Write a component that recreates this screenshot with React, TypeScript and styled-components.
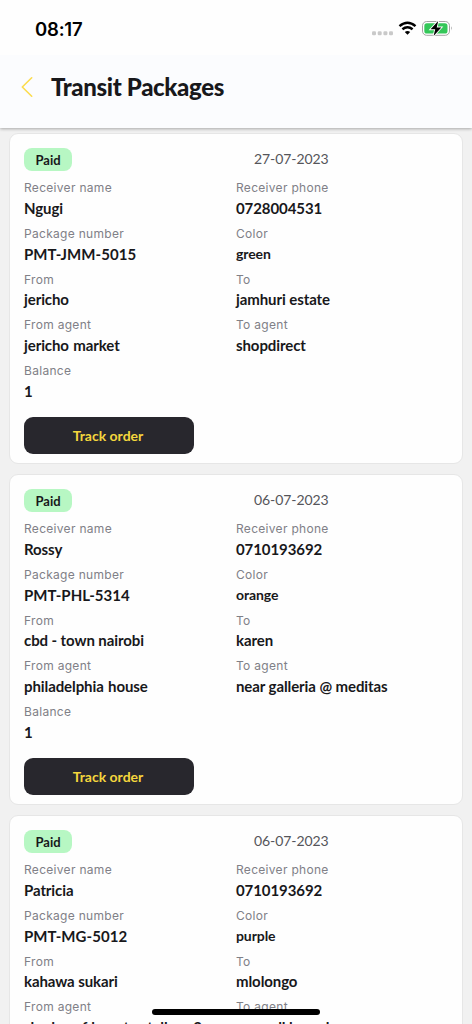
import React, { FC } from 'react';
import styled, { createGlobalStyle } from 'styled-components';

type TransitPackage = {
	date: string;
	fields: [string, string][];
};

const PACKAGES: TransitPackage[] = [
	{
		date: '27-07-2023',
		fields: [
			['Receiver name', 'Ngugi'],
			['Receiver phone', '0728004531'],
			['Package number', 'PMT-JMM-5015'],
			['Color', 'green'],
			['From', 'jericho'],
			['To', 'jamhuri estate'],
			['From agent', 'jericho market'],
			['To agent', 'shopdirect'],
			['Balance', '1'],
		],
	},
	{
		date: '06-07-2023',
		fields: [
			['Receiver name', 'Rossy'],
			['Receiver phone', '0710193692'],
			['Package number', 'PMT-PHL-5314'],
			['Color', 'orange'],
			['From', 'cbd - town nairobi'],
			['To', 'karen'],
			['From agent', 'philadelphia house'],
			['To agent', 'near galleria @ meditas'],
			['Balance', '1'],
		],
	},
	{
		date: '06-07-2023',
		fields: [
			['Receiver name', 'Patricia'],
			['Receiver phone', '0710193692'],
			['Package number', 'PMT-MG-5012'],
			['Color', 'purple'],
			['From', 'kahawa sukari'],
			['To', 'mlolongo'],
			['From agent', 'shades of beauty stall no 2'],
			['To agent', 'norwell branch'],
			['Balance', '1'],
		],
	},
];

const StatusIcons: FC = () => (
	<StatusSvg width="82" height="20" viewBox="0 0 82 20">
		<g fill="#c9c9c9">
			<rect x="2" y="12.2" width="4" height="4" rx="1.3" />
			<rect x="7.7" y="12.2" width="4" height="4" rx="1.3" />
			<rect x="13.4" y="12.2" width="4" height="4" rx="1.3" />
			<rect x="19" y="12.2" width="4" height="4" rx="1.3" />
		</g>
		<g fill="none" stroke="#000" strokeWidth="2.5">
			<path d="M29.5 7.1 Q37.5 0.3 45.5 7.1" />
			<path d="M32.4 10.3 Q37.5 6.2 42.6 10.3" />
		</g>
		<path d="M34.8 12.9 Q37.5 10.9 40.2 12.9 L37.5 15.8 Z" fill="#000" />
		<rect x="52.5" y="2.5" width="27" height="13.8" rx="4.2" fill="#fff" stroke="#a4a4a4" />
		<rect x="54.3" y="4.3" width="23.2" height="10.2" rx="2.6" fill="#34c759" />
		<path d="M81 7.3 Q82.6 9.4 81 11.5 Z" fill="#8e8e8e" />
		<path
			d="M68.2 1.9 L60.6 10.3 H65.2 L63.6 16.9 L71.3 8.4 H66.7 Z"
			fill="#000"
			stroke="#fff"
			strokeWidth="1.8"
			paintOrder="stroke"
		/>
	</StatusSvg>
);

const PackageCard: FC<TransitPackage> = ({ date, fields }) => (
	<Card>
		<CardHeader>
			<Badge>Paid</Badge>
			<DateText>{date}</DateText>
		</CardHeader>
		<Fields>
			{fields.map(([label, value]) => (
				<div key={label}>
					<Label>{label}</Label>
					<Value $kind={label}>{value}</Value>
				</div>
			))}
		</Fields>
		<TrackButton>Track order</TrackButton>
	</Card>
);

const App: FC = () => (
	<>
		<GlobalStyle />
		<Screen>
			<StatusBar>
				<Time>08:17</Time>
				<StatusIcons />
			</StatusBar>
			<Header>
				<BackButton aria-label="Back">
					<svg width="14" height="22" viewBox="0 0 14 22">
						<path
							d="M11.7 1.8 L2.3 11 L11.7 20.2"
							fill="none"
							stroke="#fbdc4e"
							strokeWidth="1.6"
							strokeLinecap="round"
							strokeLinejoin="round"
						/>
					</svg>
				</BackButton>
				<Title>Transit Packages</Title>
			</Header>
			<List>
				{PACKAGES.map((item) => (
					<PackageCard key={item.fields[2][1]} {...item} />
				))}
			</List>
			<HomeIndicator />
		</Screen>
	</>
);

const GlobalStyle = createGlobalStyle`
	* {
		box-sizing: border-box;
	}
	body {
		margin: 0;
		overflow: hidden;
		font-family: Lato, sans-serif;
		color: #18181b;
	}
`;

const Screen = styled.div`
	position: relative;
	display: flex;
	flex-direction: column;
	height: 1024px;
	overflow: hidden;
	background: #f1f1f1;
`;

const StatusBar = styled.div`
	display: flex;
	flex: none;
	align-items: flex-start;
	justify-content: space-between;
	height: 55px;
	padding: 19px 20px 0 35px;
	background: #fefefe;
`;

const Time = styled.span`
	font-family: Inter, sans-serif;
	font-size: 18.5px;
	font-weight: 600;
	line-height: 20px;
	letter-spacing: -0.2px;
	color: #000;
`;

const StatusSvg = styled.svg`
	overflow: visible;
`;

const Header = styled.header`
	display: flex;
	flex: none;
	align-items: center;
	height: 73px;
	padding: 0 20px 9px;
	background: #fbfcfe;
	box-shadow: 0 1px 3px rgba(0, 0, 0, 0.3);
	clip-path: inset(0 0 -6px);
	z-index: 1;
`;

const BackButton = styled.button`
	display: flex;
	padding: 0;
	margin-right: 17px;
	border: 0;
	background: none;
`;

const Title = styled.h1`
	margin: 0;
	font-size: 24px;
	font-weight: 900;
	line-height: 30px;
	letter-spacing: -0.35px;
	white-space: nowrap;
`;

const List = styled.main`
	display: flex;
	flex-direction: column;
	gap: 10px;
	padding: 5px 9px 0;
`;

const Card = styled.section`
	flex: none;
	height: 331px;
	padding: 14px;
	border: 1px solid #e6e6e6;
	border-radius: 9px;
	background: #fefefe;
`;

const CardHeader = styled.div`
	display: grid;
	grid-template-columns: 230px 1fr;
	height: 29px;
`;

const Badge = styled.span`
	width: 48px;
	height: 23px;
	border-radius: 8px;
	background: #b7f7c3;
	font-size: 13px;
	font-weight: 700;
	line-height: 24px;
	text-align: center;
`;

const DateText = styled.span`
	font-size: 14px;
	line-height: 22px;
	letter-spacing: -0.08px;
	color: #55555a;
`;

const Fields = styled.div`
	display: grid;
	grid-template-columns: 212px 1fr;
	grid-auto-rows: 45.7px;
`;

const Label = styled.div`
	padding-top: 0.4px;
	margin-bottom: -0.4px;
	font-family: Inter, sans-serif;
	font-size: 12px;
	line-height: 21px;
	letter-spacing: 0.3px;
	color: #808087;
`;

const Value = styled.div<{ $kind: string }>`
	font-size: ${(props) => (props.$kind === 'Color' ? 14 : 15)}px;
	font-weight: 700;
	line-height: ${(props) => (props.$kind === 'Color' ? 20 : 21)}px;
	letter-spacing: ${(props) => (props.$kind === 'Package number' ? 0.05 : -0.09)}px;
	word-spacing: ${(props) => (props.$kind === 'From agent' ? 0.8 : 0)}px;
	white-space: nowrap;
`;

const TrackButton = styled.button`
	display: block;
	width: 170px;
	height: 36.5px;
	margin-top: 12px;
	padding: 0 2px 1px 0;
	border: 0;
	border-radius: 9px;
	background: #28272d;
	font-family: Lato, sans-serif;
	font-size: 14px;
	font-weight: 700;
	color: #f5d63d;
`;

const HomeIndicator = styled.div`
	position: absolute;
	bottom: 9px;
	left: 152px;
	z-index: 2;
	width: 168px;
	height: 6px;
	border-radius: 3px;
	background: #000;
`;

export default App;
